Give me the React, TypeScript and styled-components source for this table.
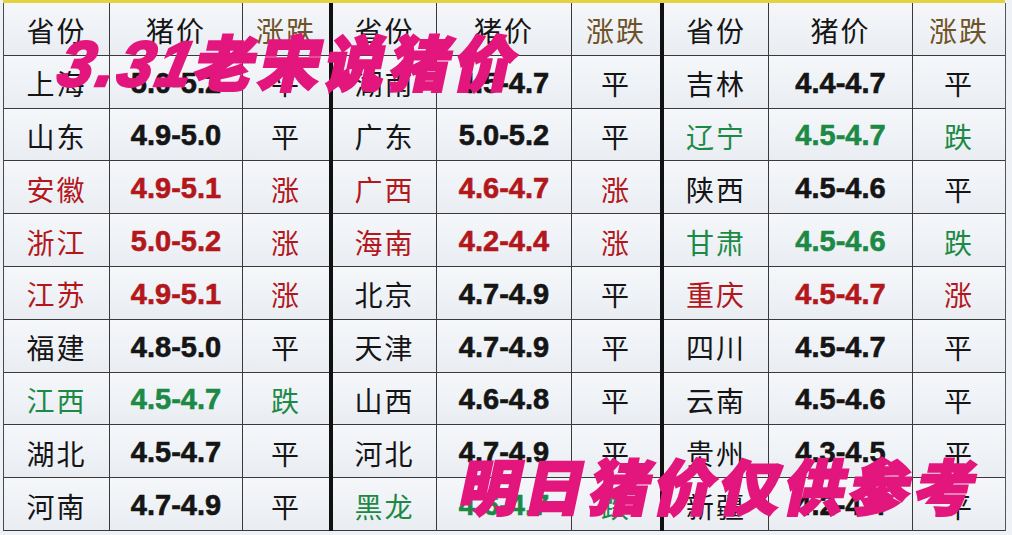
import React, { ReactElement } from 'react';
import styled, { createGlobalStyle } from 'styled-components';

type Trend = 'up' | 'flat' | 'down';

interface Row {
    name: string;
    price: string;
    trend: Trend;
}

const GlobalStyle = createGlobalStyle`
    html, body {
        margin: 0;
        padding: 0;
        background: #eef1f5;
    }
`;

const tone: Record<Trend, string> = {
    up: '#b3171c',
    flat: '#151515',
    down: '#1c8a45',
};

const label: Record<Trend, string> = {
    up: '涨',
    flat: '平',
    down: '跌',
};

const Page = styled.div`
    position: relative;
    width: 1012px;
    height: 535px;
    overflow: hidden;
    background: #eef1f5;
`;

const Board = styled.div`
    display: flex;
    margin-left: 3px;
    width: 1002px;
    border-top: 3px solid #e4d23e;
`;

const Group = styled.div<{ cols: string; last?: boolean }>`
    display: grid;
    grid-template-columns: ${({ cols }) => cols};
    grid-auto-rows: 52.8px;
    border-right: ${({ last }) => (last ? '1.5px solid #555' : '4px solid #111')};
    &:first-child {
        border-left: 1.5px solid #4a4a4a;
    }
`;

const Cell = styled.div<{ color: string; kind: 'name' | 'price' | 'trend' | 'head' }>`
    display: flex;
    align-items: center;
    justify-content: center;
    box-sizing: border-box;
    border-right: 1.5px solid #3a3a3a;
    border-bottom: 1.5px solid #3a3a3a;
    background: linear-gradient(180deg, #f5f7fa 0%, #e9edf2 100%);
    color: ${({ color }) => color};
    font-family: ${({ kind }) =>
        kind === 'price'
            ? '"Liberation Sans", Arial, sans-serif'
            : '"Noto Sans CJK SC", sans-serif'};
    font-weight: ${({ kind }) => (kind === 'price' ? 700 : 400)};
    font-size: ${({ kind }) => (kind === 'price' ? '29px' : '28px')};
    letter-spacing: ${({ kind }) => (kind === 'price' ? '0' : '2px')};
    padding-top: 3px;
    -webkit-text-stroke: ${({ kind }) => (kind === 'price' ? '0.6px' : '0')};
    &:nth-child(3n) {
        border-right: 0;
    }
`;

// pink caption laid over the table
const Overlay = styled.div<{ top: number; left: number }>`
    position: absolute;
    top: ${({ top }) => top}px;
    left: ${({ left }) => left}px;
    font-family: "Noto Sans CJK SC", sans-serif;
    font-weight: 900;
    font-size: 60px;
    line-height: 1;
    letter-spacing: 5px;
    white-space: nowrap;
    color: #e2167c;
    -webkit-text-stroke: 2.5px #e2167c;
    transform: skewX(-12deg);
`;

const Digits = styled.span`
    font-family: "Liberation Sans", Arial, sans-serif;
    font-style: italic;
    font-weight: 700;
    font-size: 64px;
    letter-spacing: 3px;
`;

const groups: { cols: string; rows: Row[] }[] = [
    {
        cols: '106px 133px 86px',
        rows: [
            { name: '上海', price: '5.0-5.2', trend: 'flat' },
            { name: '山东', price: '4.9-5.0', trend: 'flat' },
            { name: '安徽', price: '4.9-5.1', trend: 'up' },
            { name: '浙江', price: '5.0-5.2', trend: 'up' },
            { name: '江苏', price: '4.9-5.1', trend: 'up' },
            { name: '福建', price: '4.8-5.0', trend: 'flat' },
            { name: '江西', price: '4.5-4.7', trend: 'down' },
            { name: '湖北', price: '4.5-4.7', trend: 'flat' },
            { name: '河南', price: '4.7-4.9', trend: 'flat' },
        ],
    },
    {
        cols: '104px 135px 88px',
        rows: [
            { name: '湖南', price: '4.5-4.7', trend: 'flat' },
            { name: '广东', price: '5.0-5.2', trend: 'flat' },
            { name: '广西', price: '4.6-4.7', trend: 'up' },
            { name: '海南', price: '4.2-4.4', trend: 'up' },
            { name: '北京', price: '4.7-4.9', trend: 'flat' },
            { name: '天津', price: '4.7-4.9', trend: 'flat' },
            { name: '山西', price: '4.6-4.8', trend: 'flat' },
            { name: '河北', price: '4.7-4.9', trend: 'flat' },
            { name: '黑龙', price: '4.6-4.7', trend: 'down' },
        ],
    },
    {
        cols: '105px 144px 92px',
        rows: [
            { name: '吉林', price: '4.4-4.7', trend: 'flat' },
            { name: '辽宁', price: '4.5-4.7', trend: 'down' },
            { name: '陕西', price: '4.5-4.6', trend: 'flat' },
            { name: '甘肃', price: '4.5-4.6', trend: 'down' },
            { name: '重庆', price: '4.5-4.7', trend: 'up' },
            { name: '四川', price: '4.5-4.7', trend: 'flat' },
            { name: '云南', price: '4.5-4.6', trend: 'flat' },
            { name: '贵州', price: '4.3-4.5', trend: 'flat' },
            { name: '新疆', price: '4.2-4.4', trend: 'flat' },
        ],
    },
];

export default (): ReactElement => (
    <Page>
        <GlobalStyle />
        <Board>
            {groups.map((g, gi) => (
                <Group key={gi} cols={g.cols} last={gi === groups.length - 1}>
                    <Cell kind="head" color="#151515">省份</Cell>
                    <Cell kind="head" color="#151515">猪价</Cell>
                    <Cell kind="head" color="#6e5228">涨跌</Cell>
                    {g.rows.map((r) => (
                        <React.Fragment key={r.name}>
                            <Cell kind="name" color={tone[r.trend]}>{r.name}</Cell>
                            <Cell kind="price" color={tone[r.trend]}>{r.price}</Cell>
                            <Cell kind="trend" color={tone[r.trend]}>{label[r.trend]}</Cell>
                        </React.Fragment>
                    ))}
                </Group>
            ))}
        </Board>
        <Overlay top={30} left={60}>
            <Digits>3.31</Digits>老宋说猪价
        </Overlay>
        <Overlay top={454} left={462}>明日猪价仅供参考</Overlay>
    </Page>
);
